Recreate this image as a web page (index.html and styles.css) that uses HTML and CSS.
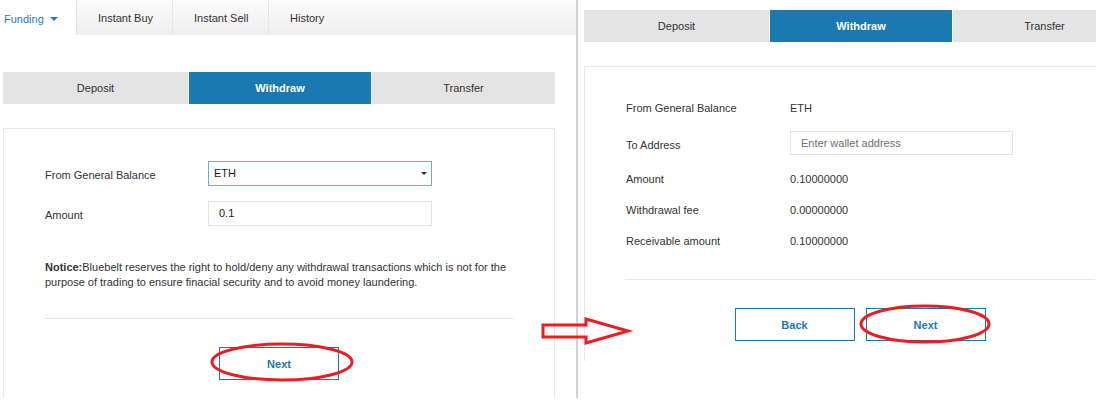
FILE: index.html
```html
<!DOCTYPE html>
<html>
<head>
<meta charset="utf-8">
<link rel="stylesheet" href="styles.css">
</head>
<body>
<div class="page">
  <section class="panel-left">
    <nav class="topnav">
      <a class="topnav-item active">Funding<span class="caret"></span></a>
      <a class="topnav-item">Instant Buy</a>
      <a class="topnav-item">Instant Sell</a>
      <a class="topnav-item grow">History</a>
    </nav>
    <div class="content">
      <div class="subtabs">
        <div class="subtab">Deposit</div>
        <div class="subtab selected">Withdraw</div>
        <div class="subtab">Transfer</div>
      </div>
      <div class="card card-left">
        <div class="form">
          <div class="field">
            <label class="field-label">From General Balance</label>
            <div class="select">ETH<span class="select-caret"></span></div>
          </div>
          <div class="field">
            <label class="field-label">Amount</label>
            <div class="input">0.1</div>
          </div>
        </div>
        <p class="notice"><b>Notice:</b>Bluebelt reserves the right to hold/deny any withdrawal transactions which is not for the<br>purpose of trading to ensure finacial security and to avoid money laundering.</p>
        <div class="divider"></div>
        <div class="actions">
          <button class="btn">Next</button>
        </div>
      </div>
    </div>
  </section>

  <section class="panel-right">
    <div class="content-right">
      <div class="subtabs">
        <div class="subtab">Deposit</div>
        <div class="subtab selected">Withdraw</div>
        <div class="subtab">Transfer</div>
      </div>
      <div class="card card-right">
        <div class="info-list">
          <div class="info-row"><span class="info-label">From General Balance</span><span class="info-value">ETH</span></div>
          <div class="info-row info-row-input"><span class="info-label label-low">To Address</span><div class="input input-address">Enter wallet address</div></div>
          <div class="info-row"><span class="info-label">Amount</span><span class="info-value">0.10000000</span></div>
          <div class="info-row"><span class="info-label">Withdrawal fee</span><span class="info-value">0.00000000</span></div>
          <div class="info-row"><span class="info-label">Receivable amount</span><span class="info-value">0.10000000</span></div>
        </div>
        <div class="divider divider-right"></div>
        <div class="actions actions-right">
          <button class="btn">Back</button>
          <button class="btn">Next</button>
        </div>
      </div>
    </div>
  </section>

  <svg class="annotations" width="1096" height="402" viewBox="0 0 1096 402">
    <ellipse cx="282" cy="362" rx="70" ry="18" fill="none" stroke="#ed1c24" stroke-width="3"/>
    <ellipse cx="925" cy="324" rx="64" ry="18" fill="none" stroke="#ed1c24" stroke-width="3"/>
    <polygon points="543,325 586,325 586,319 628,331 586,343 586,337 543,337" fill="none" stroke="#ed1c24" stroke-width="3"/>
  </svg>
</div>
</body>
</html>
```

FILE: styles.css
```css
* {
  box-sizing: border-box;
}

html, body {
  margin: 0;
  padding: 0;
  background: #ffffff;
}

body {
  font-family: "Liberation Sans", Arial, sans-serif;
  font-size: 11px;
  color: #333333;
}

.page {
  position: relative;
  display: flex;
  width: 1096px;
  height: 402px;
  overflow: hidden;
}

/* ---------- left panel ---------- */
.panel-left {
  width: 578px;
  height: 398px;
  border-right: 2px solid #d2d2d2;
  display: flex;
  flex-direction: column;
  flex-shrink: 0;
}

.topnav {
  display: flex;
  height: 35px;
}

.topnav-item {
  display: flex;
  align-items: center;
  height: 35px;
  width: 96px;
  padding-left: 21px;
  background: linear-gradient(#fbfbfb, #efefef);
  border-left: 1px solid #e6e6e6;
  color: #333333;
  font-size: 11px;
}

.topnav-item.active {
  width: 76px;
  padding-left: 4px;
  padding-top: 2px;
  background: #ffffff;
  border-left: none;
  color: #2a7bb8;
  font-size: 11px;
}

.topnav-item.grow {
  flex: 1;
  padding-left: 21px;
}

.caret {
  display: inline-block;
  width: 0;
  height: 0;
  margin-left: 6px;
  margin-top: 1px;
  border-top: 4px solid #2a7bb8;
  border-left: 4px solid transparent;
  border-right: 4px solid transparent;
}

.content {
  padding: 37px 0 0 3px;
  flex: 1;
  display: flex;
  flex-direction: column;
}

.subtabs {
  display: grid;
  grid-template-columns: 185px 182px 183px;
  column-gap: 1px;
  width: 552px;
  height: 32px;
}

.subtab {
  background: #e4e4e4;
  color: #333333;
  text-align: center;
  line-height: 32px;
  font-size: 11px;
}

.subtab.selected {
  background: #1a79b0;
  color: #ffffff;
  font-weight: bold;
}

.card {
  margin-top: 24px;
  width: 552px;
  border: 1px solid #e8e8e8;
  border-bottom: none;
  padding: 32px 40px 0 40px;
}

.card-left {
  flex: 1;
}

.form {
  display: flex;
  flex-direction: column;
  gap: 15px;
}

.field {
  display: flex;
  align-items: center;
  height: 25px;
}

.field-label {
  width: 164px;
  padding-left: 1px;
  padding-top: 2px;
}

.select {
  position: relative;
  width: 224px;
  height: 25px;
  border: 1px solid #66aee8;
  padding-left: 5px;
  line-height: 23px;
  color: #222222;
  font-size: 11px;
}

.select-caret {
  position: absolute;
  right: 4px;
  top: 10px;
  width: 0;
  height: 0;
  border-top: 3px solid #333333;
  border-left: 3px solid transparent;
  border-right: 3px solid transparent;
}

.input {
  width: 224px;
  height: 25px;
  border: 1px solid #e3e3e3;
  padding-left: 10px;
  line-height: 23px;
  color: #222222;
  font-size: 11px;
}

.notice {
  margin: 34px 0 0 0;
  padding-left: 1px;
  line-height: 15px;
  font-size: 11px;
  color: #333333;
}

.divider {
  margin-top: 28px;
  height: 1px;
  background: #e8e8e8;
}

.actions {
  display: flex;
  justify-content: center;
  gap: 11px;
  margin-top: 28px;
}

.btn {
  width: 120px;
  height: 33px;
  background: #ffffff;
  border: 1px solid #1a79b0;
  color: #1a79b0;
  font-family: "Liberation Sans", Arial, sans-serif;
  font-size: 11px;
  font-weight: bold;
  padding: 0;
}

/* ---------- right panel ---------- */
.panel-right {
  flex: 1;
  overflow: hidden;
  padding: 10px 0 0 6px;
}

.content-right {
  width: 552px;
}

.card-right {
  height: 295px;
  padding-top: 33px;
}

.info-list {
  display: flex;
  flex-direction: column;
  gap: 15px;
}

.info-row {
  display: flex;
  align-items: center;
  height: 16px;
}

.info-row-input {
  height: 24px;
  margin-bottom: 1px;
}

.info-label {
  width: 165px;
  padding-left: 1px;
}

.label-low {
  padding-top: 4px;
}

.info-value {
  color: #333333;
}

.input-address {
  width: 223px;
  height: 24px;
  line-height: 22px;
  color: #6f6f6f;
}

.divider-right {
  margin-top: 30px;
}

.actions-right {
  margin-top: 28px;
}

/* ---------- annotation overlay ---------- */
.annotations {
  position: absolute;
  left: 0;
  top: 0;
  pointer-events: none;
}
```
